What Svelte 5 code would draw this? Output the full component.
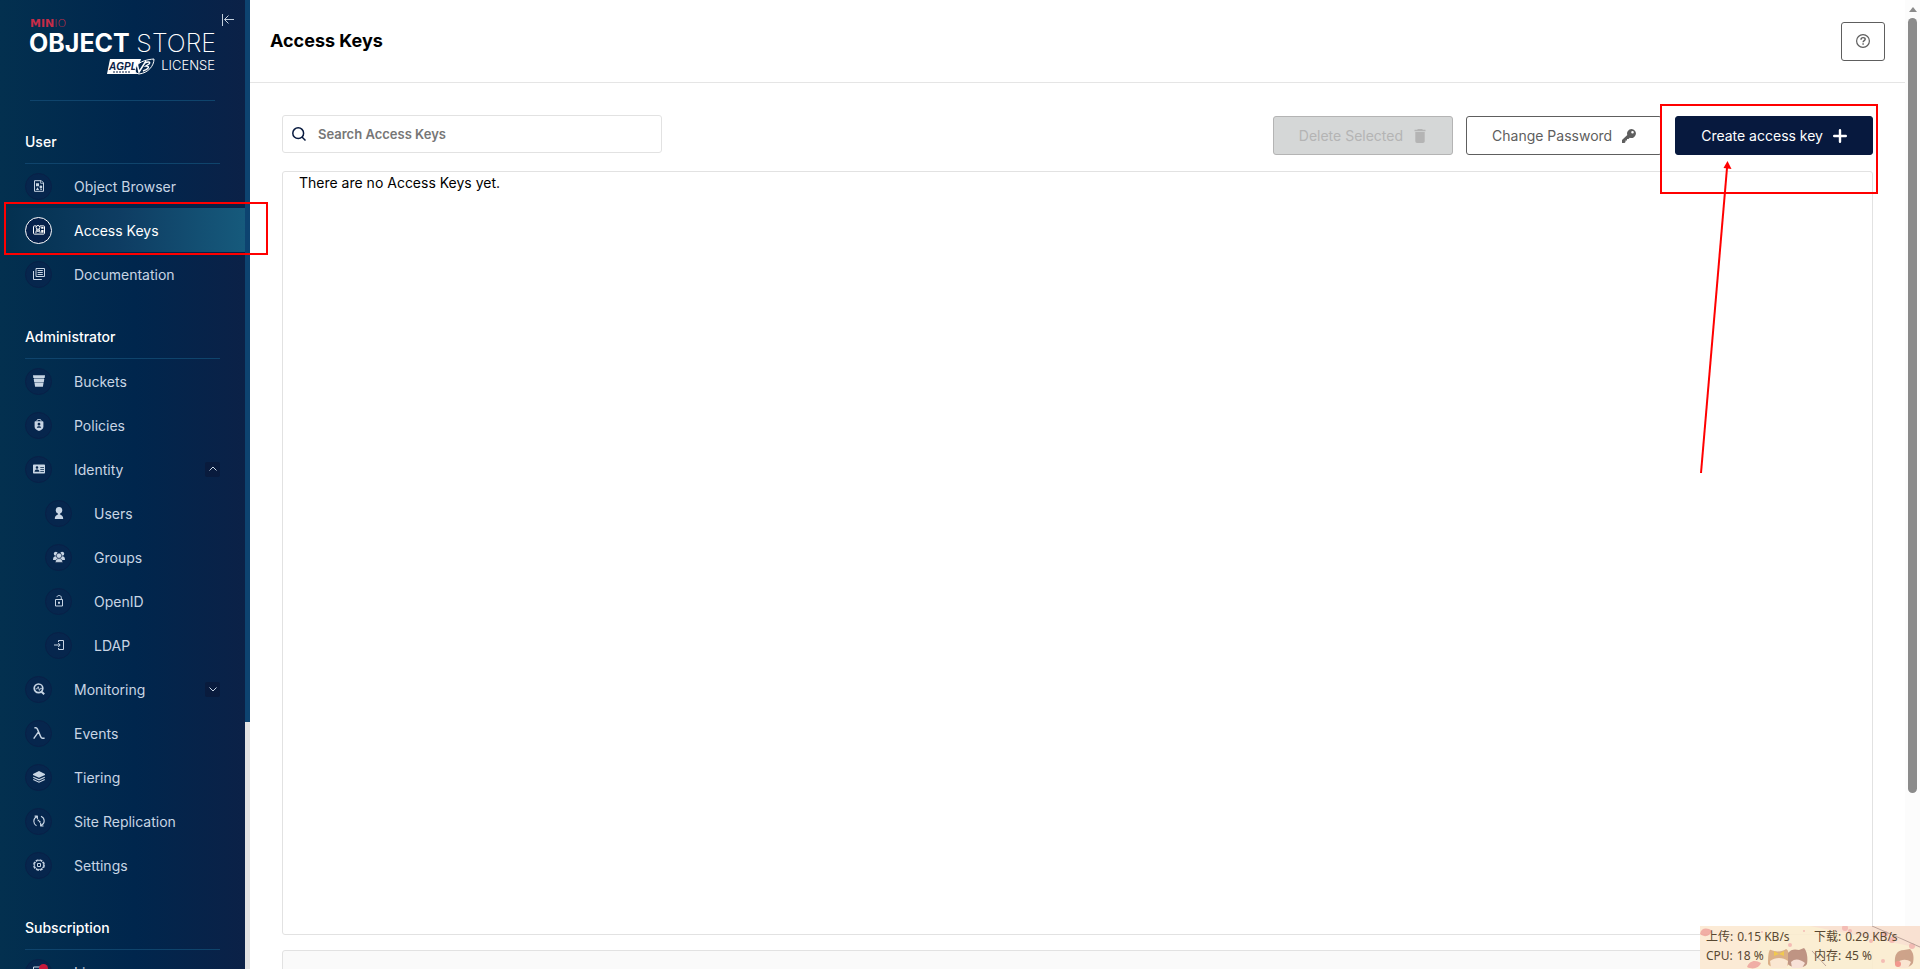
<script>
	const icons = {
		browser: `<path d="M1.5.7h6.8l2.2 2.2v8.4h-9z" fill="none" stroke="currentColor"/><path d="M7.6.7v2.6h2.9" fill="none" stroke="currentColor" stroke-width=".8"/><path d="M3 3.2h3v3H3zM4.5 7.2l1.6 2.8H2.9z"/><circle cx="7.9" cy="7" r="1.4"/><path d="M7.4 8.8h1.4V10H7.4z"/>`,
		keys: `<path d="M3.2 1.9H1.3a.8.8 0 0 0-.8.8v6.6c0 .4.3.8.8.8h9.4c.5 0 .8-.4.8-.8V2.7a.8.8 0 0 0-.8-.8H7" fill="none" stroke="currentColor"/><circle cx="5" cy="3.4" r="1.9" fill="none" stroke="currentColor"/><path d="M4 5 2.6 8.6M5.8 5l1.6 3.6M2.8 8.4 7 5.9M7.2 8.4 3.6 6" fill="none" stroke="currentColor" stroke-width=".8"/><path d="M8.2 3h2.3v1.8H8.2zM8.2 6h2.3v2.8H8.2z"/>`,
		docs: `<path d="M3 .5h8.500v8H3z" fill="none" stroke="currentColor"/><path d="M.5 3v8.500h8.300" fill="none" stroke="currentColor"/><path d="M4.600 2.500h5.200M4.600 4.500h5.200M4.600 6.500h5.200" stroke="currentColor"/>`,
		buckets: `<path d="M0 .2h12l-.3 2.900H.3zM.7 4h10.600l-.5 3.200H1.200zM1.500 8.100h9l-.6 3.700H2.100z"/><path d="M1 3.500h10M1.500 7.600h9" stroke="currentColor" opacity=".5"/>`,
		policies: `<path d="M4 2.4V1.5C4 .8 4.6.5 5.2.5h1.6c.6 0 1.2.3 1.2 1v.9" fill="none" stroke="currentColor"/><path fill-rule="evenodd" d="M2.600 2.200h6.800c.6 0 1 .4 1 1v4.600c0 2-2 3.400-4.400 4.200C3.600 11.200 1.600 9.800 1.600 7.800V3.200c0-.6.4-1 1-1zM6 3.800a1.400 1.400 0 1 0 0 2.800 1.400 1.400 0 0 0 0-2.800zM3.800 8.800h4.400C8 7.600 7 7.200 6 7.200s-2 .4-2.200 1.600z"/>`,
		identity: `<path fill-rule="evenodd" d="M1 1.500h10c.6 0 1 .4 1 1v7c0 .6-.4 1-1 1H1c-.6 0-1-.4-1-1v-7c0-.6.4-1 1-1zM4 3.200a1.300 1.300 0 1 0 0 2.600 1.300 1.300 0 0 0 0-2.600zM1.500 8.800h5C6.300 7.200 5.200 6.600 4 6.600s-2.300.6-2.500 2.200zM7.300 4v.8H11V4zM7.300 6v.8H11V6zM7.300 8v.8H11V8z"/>`,
		users: `<circle cx="6" cy="3.200" r="3.200"/><path d="M4.800 5h2.400v2.500H4.800zM1.800 12c-.2-3 1.800-4.500 4.200-4.500s4.400 1.500 4.200 4.500z"/>`,
		groups: `<circle cx="2.800" cy="2.800" r="2"/><circle cx="9.200" cy="2.800" r="2"/><path d="M0 9c0-3 1-3.800 2.800-3.800h6.400C11 5.200 12 6 12 9z"/><circle cx="6" cy="4.700" r="2.700" stroke="#0a2147" stroke-width=".7"/><path d="M2.300 11.400c0-2.500 1.400-3.800 3.700-3.800s3.700 1.300 3.700 3.800z" stroke="#0a2147" stroke-width=".6"/>`,
		openid: `<path d="M2.500 4.500h7v6.500h-7z" fill="none" stroke="currentColor"/><path d="M4 2.200C4 1 4.900.500 6.100.500s2.200.8 2.200 2v2" fill="none" stroke="currentColor"/><path d="M5 6.700h2v2H5z"/>`,
		ldap: `<path d="M5.500 3V1.500h5v9h-5V9" fill="none" stroke="currentColor"/><path d="M1 6h6M5.200 4l2 2-2 2" fill="none" stroke="currentColor"/>`,
		monitoring: `<circle cx="5.500" cy="5.300" r="4.300" fill="none" stroke="currentColor" stroke-width="1.700"/><path d="m8.500 8.700 2.700 2.600" stroke="currentColor" stroke-width="2"/><path d="M2.700 5.800h1.500l1-2.200 1.200 3.800 1-2h1.500" fill="none" stroke="currentColor" stroke-width=".9"/>`,
		events: `<path d="M1.400.7h1.400c.8 0 1.200.4 1.500 1.200l3.500 8c.4.900.9 1.300 1.700 1.300h2.100M5.500 4.800.700 11.600" fill="none" stroke="currentColor" stroke-width="1.400"/>`,
		tiering: `<path d="m6 0 6 3v1L6 6.700 0 4V3z"/><path d="M.2 6.200 6 8.800l5.800-2.600M.2 8.500 6 11.200l5.800-2.700" fill="none" stroke="currentColor" stroke-width="1.200"/>`,
		replication: `<path d="M4.700 1.100H1.600M4.400 1v3.200M4 1.600C1.900 2.500.8 4.200.8 6.200c0 1.900 1 3.500 2.700 4.500M7.200 11h3.300M7.600 11V7.800M8 10.500c2.100-.9 3.200-2.600 3.200-4.500S10 2.200 8 1.300" fill="none" stroke="currentColor" stroke-width="1.100"/><path d="M4.700 4.800h1.600v1.400H4.700zM6 6.100h1.500v1.400H6z"/>`,
		settings: `<circle cx="6" cy="6" r="5.200" fill="none" stroke="currentColor" stroke-width="1.400" stroke-dasharray="2.900 1.180"/><circle cx="6" cy="6" r="4.500" fill="none" stroke="currentColor" stroke-width=".8"/><path d="M4.500 4.500h3v3h-3z" fill="none" stroke="currentColor"/>`,
		license: `<path d="M.5 1h11v10H.5z" fill="none" stroke="currentColor"/><path d="M2.500 4h7M2.500 6h7" stroke="currentColor"/>`
	};

	const sections = [
		{
			title: "User",
			items: [
				{ label: "Object Browser", icon: "browser" },
				{ label: "Access Keys", icon: "keys" },
				{ label: "Documentation", icon: "docs" }
			]
		},
		{
			title: "Administrator",
			items: [
				{ label: "Buckets", icon: "buckets" },
				{ label: "Policies", icon: "policies" },
				{
					label: "Identity",
					icon: "identity",
					children: [
						{ label: "Users", icon: "users" },
						{ label: "Groups", icon: "groups" },
						{ label: "OpenID", icon: "openid" },
						{ label: "LDAP", icon: "ldap" }
					]
				},
				{ label: "Monitoring", icon: "monitoring", children: [] },
				{ label: "Events", icon: "events" },
				{ label: "Tiering", icon: "tiering" },
				{ label: "Site Replication", icon: "replication" },
				{ label: "Settings", icon: "settings" }
			]
		},
		{
			title: "Subscription",
			items: [{ label: "License", icon: "license", badge: true }]
		}
	];

	let active = $state("Access Keys");
	let open = $state({ Identity: true, Monitoring: false });
	let search = $state("");

	function select(e, item) {
		e.preventDefault();
		if (item.children) open[item.label] = !open[item.label];
		else active = item.label;
	}
</script>

{#snippet row(item, nested)}
	<a
		class="item"
		class:nested
		class:active={active === item.label}
		href="#{item.icon}"
		onclick={(e) => select(e, item)}
	>
		<span class="icon">
			<svg viewBox="0 0 12 12" width="12" height="12" fill="currentColor" aria-hidden="true">
				{@html icons[item.icon]}
			</svg>
			{#if item.badge}<span class="badge"></span>{/if}
		</span>
		<span class="label">{item.label}</span>
		{#if item.children}
			<span class="caret" class:up={open[item.label]}>
				<svg viewBox="0 0 8 8" width="8" height="8" fill="none" stroke="currentColor" aria-hidden="true">
					<path d="m.5 2.500 3.500 3.500 3.500-3.500" />
				</svg>
			</span>
		{/if}
	</a>
{/snippet}

<div class="app">
	<aside>
		<nav>
			<div class="brand">
				<svg class="logo" viewBox="0 0 185 58" width="185" height="58" role="img" aria-label="MinIO Object Store, AGPL v3 license">
					<text class="min" x="0" y="11">MIN<tspan class="io">IO</tspan></text>
					<text class="object" x="-1" y="36">OBJECT</text>
					<text class="store" x="186" y="36" text-anchor="end">STORE</text>
					<path d="M80 43h31l-4 15H77z" fill="#fff" />
					<text class="agpl" x="79" y="54">AGPL</text>
					<path d="M83 56h17" stroke="#0a2147" stroke-dasharray="2 1" />
					<path d="M106 57c-3-7 4-13 18-14 0 7-6 14-15 15z" fill="#07284c" stroke="#fff" />
					<path d="m107 47 2 9 7-11" fill="none" stroke="#fff" stroke-width="1.500" />
					<path d="M115 47c3-2 6-1 4 1l-3 2c4 0 3 3-3 5" fill="none" stroke="#fff" stroke-width="1.500" />
					<text class="license" x="185" y="54" text-anchor="end">LICENSE</text>
				</svg>
				<button class="collapse" aria-label="Collapse menu">
					<svg viewBox="0 0 12 12" width="12" height="12" fill="none" stroke="currentColor">
						<path d="M.5 0v12M12 5.500H2.500M6.500 1.500l-4 4 4 4" />
					</svg>
				</button>
			</div>

			{#each sections as section}
				<h2>{section.title}</h2>
				{#each section.items as item}
					{@render row(item, false)}
					{#if item.children && open[item.label]}
						{#each item.children as child}
							{@render row(child, true)}
						{/each}
					{/if}
				{/each}
			{/each}
		</nav>
		<div class="menu-track"><div class="menu-thumb"></div></div>
	</aside>

	<main>
		<header>
			<h1>Access Keys</h1>
			<button class="btn help" aria-label="Help">
				<svg viewBox="0 0 14 14" width="14" height="14" fill="none" stroke="currentColor">
					<circle cx="7" cy="7" r="6.400" stroke-width="1.200" />
					<path d="M5 5.700c0-1.400.8-2.100 2.100-2.100S9.200 4.300 9.200 5.300C9.200 6.600 7.100 6.700 7.100 8.300M7.100 9.300v1.400" stroke-width="1.400" />
				</svg>
			</button>
		</header>

		<div class="content">
			<div class="toolbar">
				<label class="search">
					<svg viewBox="0 0 14 14" width="14" height="14" fill="none" stroke="#07193e" aria-hidden="true">
						<circle cx="6.200" cy="6.200" r="5.400" stroke-width="1.500" />
						<path d="m10 10 3.500 3.500" stroke-width="1.500" />
					</svg>
					<input type="text" placeholder="Search Access Keys" aria-label="Search Access Keys" bind:value={search} />
				</label>
				<div class="actions">
					<button class="btn" disabled>
						Delete Selected
						<svg viewBox="0 0 14 14" width="14" height="14" fill="currentColor" aria-hidden="true">
							<path d="M4.500 0h5v.7h3V2.200h-11V.7h3zM2.300 3h9.400v9c0 1.200-.6 2-1.800 2H4.100c-1.200 0-1.800-.8-1.800-2z" />
						</svg>
					</button>
					<button class="btn">
						Change Password
						<svg viewBox="0 0 14 14" width="14" height="14" fill="currentColor" aria-hidden="true">
							<path fill-rule="evenodd" d="M9.500 0a4.500 4.500 0 1 1-1.700 8.700L6.500 10H5v1.500H3.500V13l-1 1H0v-3l5.300-5A4.500 4.500 0 0 1 9.500 0zm1 2a1.300 1.300 0 1 0 0 2.600 1.300 1.300 0 0 0 0-2.600z" />
						</svg>
					</button>
					<button class="btn primary">
						Create access key
						<svg viewBox="0 0 14 14" width="14" height="14" fill="none" stroke="currentColor" aria-hidden="true">
							<path d="M7 1.200v11.600M1.200 7h11.600" stroke-width="2.400" stroke-linecap="round" />
						</svg>
					</button>
				</div>
			</div>
			<section class="list">There are no Access Keys yet.</section>
			<section class="about"></section>
		</div>
	</main>

	<div class="page-track">
		<div class="page-up"></div>
		<div class="page-thumb"></div>
	</div>

	<div class="mark menu-mark"></div>
	<div class="mark create-mark"></div>
	<svg class="arrow" viewBox="0 0 36 316" width="36" height="316" aria-hidden="true">
		<path d="M5 313 31 8" stroke="#f00" stroke-width="2" />
		<path d="m31.500 1 4 8-8-1z" fill="#f00" />
	</svg>

	<div class="monitor">
		<svg viewBox="0 0 220 43" width="220" height="43" aria-hidden="true">
			<rect width="220" height="43" fill="#fbedcf" />
			<path d="M0 0h70l-25 43H0z" fill="#fce9d2" />
			<path d="M110 0h110v22z" fill="#f9dfce" />
			<path d="M0 8c1-6 7-7 12-3-2 5-7 7-12 3zM47 41c2-6 8-8 14-4-2 5-8 7-14 4z" fill="#f0a69c" />
			<g fill="#f3b5ad">
				<circle cx="18" cy="30" r="1" /><circle cx="90" cy="19" r="2" /><circle cx="104" cy="5" r="1" />
				<circle cx="145" cy="2" r="3" /><circle cx="150" cy="5" r="2" /><circle cx="171" cy="15" r="2" />
				<circle cx="185" cy="8" r="3" /><circle cx="192" cy="14" r="3" /><circle cx="183" cy="35" r="2" />
				<circle cx="212" cy="20" r="3" /><circle cx="62" cy="6" r="1" /><circle cx="135" cy="27" r="1" />
			</g>
			<path d="m172 0 30 13 18 8M112 25l14 15" fill="none" stroke="#b59a90" />
			<path d="M68 38c0-10 1-15 3-14 4 2 12 2 15-1 3 1 3 6 3 15-3 5-18 5-21 0z" fill="#d8a97c" />
			<path d="M70 35c5-4 13-4 18 0l-1 7H71z" fill="#fae5ce" />
			<path d="m74 25 5 3 5-3v5l-5-2-5 2z" fill="#f0c43c" />
			<path d="M88 27c3-4 7-4 11-3l5-2c3 3 4 10 3 16-3 5-15 5-19 0z" fill="#b98977" />
			<path d="M91 36c4-4 9-3 14 1l-3 5H92z" fill="#f8dfd4" />
			<path d="M195 38c-1-9 2-14 9-14l6-1c4 4 4 9 3 14-3 6-15 6-18 1z" fill="#c99a7e" />
			<path d="M197 37c4-4 10-4 14-1l-3 6h-9z" fill="#fae3cd" />
			<circle cx="198" cy="38" r="3" fill="#f18d81" />
		</svg>
		<dl>
			<div><dt>上传:</dt><dd>0.15 KB/s</dd></div>
			<div><dt>下载:</dt><dd>0.29 KB/s</dd></div>
			<div><dt>CPU:</dt><dd>18 %</dd></div>
			<div><dt>内存:</dt><dd>45 %</dd></div>
		</dl>
	</div>
</div>

<style>
	:global(body) {
		overflow: hidden;
	}

	.app {
		position: relative;
		display: flex;
		height: 100vh;
		overflow: hidden;
		background: #fff;
		color: #000;
		font: 14px/20px Inter, "Liberation Sans", sans-serif;
	}

	button,
	input {
		font: inherit;
	}

	aside {
		display: flex;
		flex: 0 0 250px;
	}

	nav {
		flex: 1;
		overflow: hidden;
		background: linear-gradient(90deg, #03304f 0%, #00264d 55%, #0b2147 100%);
		color: #fff;
	}

	.brand {
		position: relative;
		height: 84px;
		margin: 0 30px;
		padding-top: 16px;
		border-bottom: 1px solid #0f446c;
	}

	.logo {
		display: block;
		overflow: visible;
		fill: #fff;
	}

	.min {
		font: bold 11px "DejaVu Sans", sans-serif;
		fill: #c72c48;
	}

	.io {
		font-weight: 200;
	}

	.object {
		font-size: 25px;
		font-weight: 700;
	}

	.store {
		font-size: 25px;
		font-weight: 200;
	}

	.agpl {
		font: italic 700 10px "Liberation Sans", sans-serif;
		fill: #0a2147;
	}

	.license {
		font-size: 13px;
		font-weight: 300;
	}

	.collapse {
		position: absolute;
		top: 14px;
		right: -19px;
		display: flex;
		padding: 0;
		border: 0;
		background: none;
		color: #c3cfdb;
	}

	h2 {
		margin: 0 25px;
		padding: 31px 0 11px;
		border-bottom: 1px solid #0f446c;
		font-size: 14px;
		font-weight: 500;
		line-height: 20px;
	}

	.item {
		display: flex;
		align-items: center;
		height: 44px;
		padding: 0 25px;
		color: #c8d5e4;
		text-decoration: none;
	}

	.nested {
		padding-left: 45px;
	}

	.active {
		background: linear-gradient(90deg, #03304f, #0e3d63 50%, #165a7c);
		color: #fff;
	}

	.icon {
		position: relative;
		display: grid;
		place-items: center;
		box-sizing: border-box;
		width: 27px;
		height: 27px;
		margin-right: 22px;
		border: 1px solid #082047;
		border-radius: 50%;
		background: #06264d;
	}

	.active .icon {
		border-color: #fff;
		background: #06214b;
	}

	.badge {
		position: absolute;
		top: 4px;
		right: 3px;
		width: 9px;
		height: 9px;
		border-radius: 50%;
		background: #c8193c;
	}

	.label {
		flex: 1;
		padding-top: 1px;
	}

	.caret {
		display: grid;
		place-items: center;
		width: 15px;
		height: 15px;
		border-radius: 2px;
		background: #091b3d;
	}

	.up svg {
		transform: rotate(180deg);
	}

	.menu-track {
		width: 5px;
		background: #e2e2e2;
	}

	.menu-thumb {
		height: 74.5%;
		background: #0d4370;
	}

	main {
		display: flex;
		flex: 1;
		flex-direction: column;
		min-width: 0;
	}

	header {
		display: flex;
		flex: none;
		align-items: center;
		justify-content: space-between;
		height: 82px;
		padding: 0 20px;
		border-bottom: 1px solid #e5e5e5;
	}

	h1 {
		margin: 0;
		font-size: 18px;
		font-weight: 700;
		line-height: 24px;
	}

	.content {
		padding: 32px;
	}

	.toolbar {
		display: flex;
		justify-content: space-between;
		margin-bottom: 16px;
	}

	.search {
		display: flex;
		align-items: center;
		gap: 12px;
		box-sizing: border-box;
		width: 380px;
		height: 38px;
		padding: 0 9px;
		border: 1px solid #e2e2e2;
		border-radius: 3px;
	}

	.search input {
		flex: 1;
		padding: 0;
		border: 0;
		outline: 0;
		background: none;
		font-size: 13px;
		font-weight: 600;
	}

	.search input::placeholder {
		color: #767676;
	}

	.actions {
		display: flex;
		gap: 13px;
		padding-top: 1px;
	}

	.btn {
		display: flex;
		align-items: center;
		justify-content: center;
		gap: 10px;
		box-sizing: border-box;
		height: 39px;
		padding: 0 25px;
		border: 1px solid #5e5e5e;
		border-radius: 3px;
		background: #fff;
		color: #5e5e5e;
		white-space: nowrap;
	}

	.btn:disabled {
		border-color: #b4b4b4;
		background: #d5d7d7;
		color: #b4b4b4;
	}

	.primary {
		border-color: #07193e;
		background: #07193e;
		color: #fff;
	}

	.help {
		width: 44px;
		padding: 0;
	}

	.list {
		box-sizing: border-box;
		height: calc(100vh - 205px);
		padding: 1px 16px;
		border: 1px solid #e2e2e2;
		border-radius: 3px;
	}

	.about {
		height: 120px;
		margin-top: 15px;
		border: 1px solid #e2e2e2;
		border-radius: 3px;
		background: #fafafa;
	}

	.page-track {
		display: flex;
		flex: 0 0 15px;
		flex-direction: column;
		align-items: center;
		background: #fcfcfc;
	}

	.page-up {
		margin: 7px 0 6px;
		border: 4px solid transparent;
		border-top: 0;
		border-bottom: 5px solid #8b8b8b;
	}

	.page-thumb {
		width: 9px;
		height: 80%;
		border-radius: 5px;
		background: #8b8b8b;
	}

	.mark {
		position: absolute;
		box-sizing: border-box;
		border: 2px solid #f00;
		pointer-events: none;
	}

	.menu-mark {
		top: 202px;
		left: 4px;
		width: 264px;
		height: 53px;
	}

	.create-mark {
		top: 104px;
		right: 42px;
		width: 218px;
		height: 90px;
	}

	.arrow {
		position: absolute;
		top: 160px;
		right: 188px;
		pointer-events: none;
	}

	.monitor {
		position: absolute;
		right: 0;
		bottom: 0;
		width: 220px;
		height: 43px;
		color: #594831;
		font: 12px/19px "Noto Sans", "Noto Sans CJK SC", sans-serif;
	}

	.monitor svg {
		position: absolute;
		opacity: 0.9;
	}

	dl {
		position: relative;
		display: grid;
		grid-template-columns: 108px 1fr;
		margin: 0;
		padding: 1px 0 0 6px;
	}

	dl div {
		display: flex;
		gap: 4px;
		white-space: nowrap;
	}

	dd {
		margin: 0;
	}
</style>
